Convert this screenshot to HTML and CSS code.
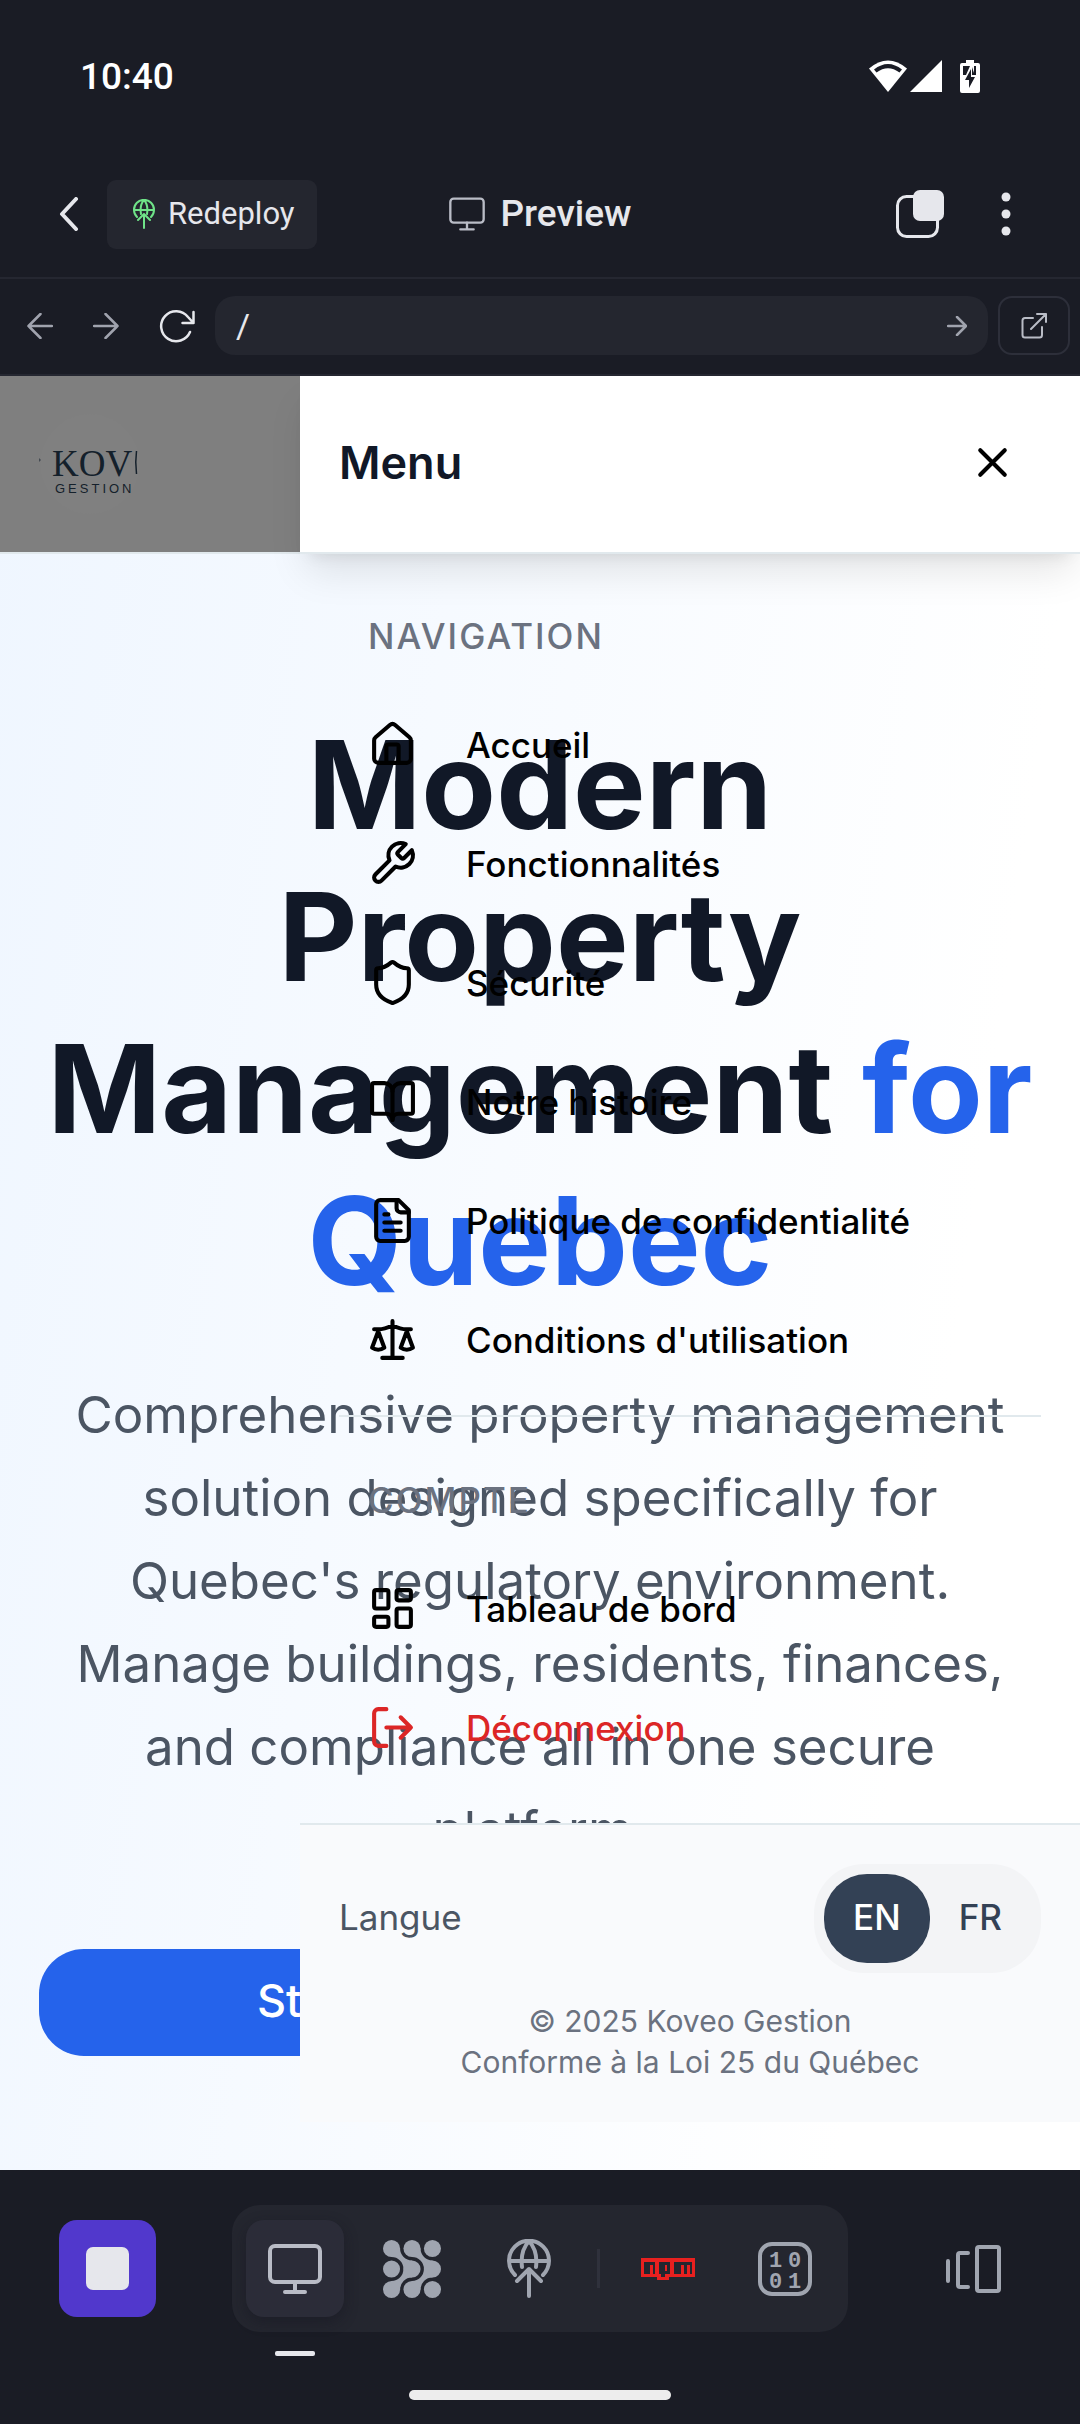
FILE: index.html
```html
<!DOCTYPE html>
<html lang="fr">
<head>
<meta charset="utf-8">
<meta name="viewport" content="width=device-width, initial-scale=1">
<title>Preview</title>
<link rel="stylesheet" href="styles.css">
</head>
<body>
<div class="status-bar">
  <span class="clock">10:40</span>
  <svg class="status-icons" width="112" height="34" viewBox="0 0 112 34" aria-hidden="true">
    <path d="M0 8.500Q19-7.500 38 8.500L19 32Z" fill="#fff"/>
    <path d="M5 9.500Q19-1.500 33 9.500L30.500 12.500Q19 4 7.500 12.500Z" fill="#1a1c25"/>
    <path d="M73 0V32H41Z" fill="#fff"/>
    <path d="M97 0H105V3H109Q111 3 111 5V31Q111 33 109 33H93Q91 33 91 31V5Q91 3 93 3H97Z" fill="#fff"/>
    <path d="M94 6H101L97 15H94ZM103 7V15H107V6H105V13" fill="#1a1c25"/>
    <path d="M102 9L96 20H100V28L106 17H102Z" fill="#1a1c25"/>
  </svg>
</div>

<header class="app-bar">
  <div class="app-left">
    <button class="icon-button back" aria-label="Back">
      <svg width="20" height="34" viewBox="0 0 20 34"><path d="M17 2L3 17L17 32" fill="none" stroke="#e6e7ec" stroke-width="4" stroke-linecap="round" stroke-linejoin="round"/></svg>
    </button>
    <button class="redeploy">
      <svg width="22" height="30" viewBox="0 0 44 60" fill="none" stroke="#6fe388" stroke-width="4" stroke-linecap="round" stroke-linejoin="round"><path d="M8 36A20 20 0 1 1 36 36M2 22H42M16 30Q13 12 22 2Q31 12 28 30M22 58V30M10 42L22 30L34 42"/></svg>
      Redeploy
    </button>
  </div>
  <h1 class="app-title">
    <svg width="36" height="34" viewBox="0 0 54 50" fill="none" stroke="#b9bcc6" stroke-width="3.500" stroke-linecap="round"><rect x="2" y="2" width="50" height="36" rx="5"/><path d="M27 38V48M17 48H37"/></svg>
    Preview
  </h1>
  <div class="app-right">
    <button class="icon-button" aria-label="Tabs">
      <svg width="48" height="48" viewBox="0 0 48 48"><rect x="1.500" y="6.500" width="40" height="40" rx="9" fill="none" stroke="#e6e7ec" stroke-width="3"/><rect x="17" y="0" width="31" height="31" rx="7" fill="#e6e7ec"/></svg>
    </button>
    <button class="icon-button" aria-label="More">
      <svg width="10" height="44" viewBox="0 0 10 44" fill="#e6e7ec"><circle cx="5" cy="5" r="4.500"/><circle cx="5" cy="22" r="4.500"/><circle cx="5" cy="39" r="4.500"/></svg>
    </button>
  </div>
</header>

<div class="url-bar">
  <div class="url-nav">
    <button class="icon-button" aria-label="Previous page"><svg width="26" height="26" viewBox="0 0 26 26" class="muted-stroke"><path d="M25 13H1.500M13.500 1L1.500 13L13.500 25"/></svg></button>
    <button class="icon-button" aria-label="Next page"><svg width="26" height="26" viewBox="0 0 26 26" class="muted-stroke"><path d="M1 13H24.500M12.500 1L24.500 13L12.500 25"/></svg></button>
    <button class="icon-button" aria-label="Reload"><svg width="36" height="34" viewBox="0 0 36 34" fill="none" stroke="#e6e7ec" stroke-width="2.500" stroke-linecap="round" stroke-linejoin="round"><path d="M31 23A15 15 0 1 1 29 8L34.500 14M34.500 3V14H23.500"/></svg></button>
  </div>
  <form class="url-field">
    <input type="text" value="/" aria-label="Path">
    <button class="icon-button" type="button" aria-label="Go"><svg width="20" height="20" viewBox="0 0 20 20" class="muted-stroke"><path d="M1 10H19M10 1L19 10L10 19"/></svg></button>
  </form>
  <button class="open-external" aria-label="Open in new tab">
    <svg width="26" height="26" viewBox="0 0 26 26" fill="none" stroke="#b9bcc6" stroke-width="2" stroke-linecap="round" stroke-linejoin="round"><path d="M12 5H4Q1.500 5 1.500 7.500V22Q1.500 24.500 4 24.500H18.500Q21 24.500 21 22V14M16 1H25V9M25 1L10 16"/></svg>
  </button>
</div>

<main class="site">
  <div class="site-header">
    <svg class="logo" width="102" height="100" viewBox="0 0 102 100" role="img" aria-label="Koveo Gestion">
      <circle cx="51" cy="50" r="50" fill="#808080"/>
      <path d="M0 44L2 46L0 48Z" fill="#444b52"/>
      <text x="13" y="62" class="logo-name">KOV</text>
      <path d="M97.500 37Q96 48 97.500 60" stroke="#14202b" stroke-width="1.500" fill="none"/>
      <text x="16" y="79" class="logo-sub">GESTION</text>
    </svg>
  </div>

  <section class="hero">
    <h2>Modern Property Management <span>for Quebec</span></h2>
    <p>Comprehensive property management solution designed specifically for Quebec's regulatory environment. Manage buildings, residents, finances, and compliance all in one secure platform.</p>
    <button class="start">Start</button>
  </section>

  <aside class="drawer">
    <header class="drawer-header">
      <h2>Menu</h2>
      <button class="icon-button" aria-label="Fermer"><svg class="menu-icon" viewBox="0 0 24 24"><path d="M18 6 6 18M6 6l12 12"/></svg></button>
    </header>
    <nav class="drawer-nav">
      <h3>NAVIGATION</h3>
      <ul>
        <li><a href="#accueil"><svg class="menu-icon" viewBox="0 0 24 24"><path d="M15 21v-8a1 1 0 0 0-1-1h-4a1 1 0 0 0-1 1v8"/><path d="M3 10a2 2 0 0 1 .709-1.528l7-5.999a2 2 0 0 1 2.582 0l7 5.999A2 2 0 0 1 21 10v9a2 2 0 0 1-2 2H5a2 2 0 0 1-2-2z"/></svg>Accueil</a></li>
        <li><a href="#fonctionnalites"><svg class="menu-icon" viewBox="0 0 24 24"><path d="M14.700 6.300a1 1 0 0 0 0 1.400l1.600 1.600a1 1 0 0 0 1.400 0l3.770-3.770a6 6 0 0 1-7.940 7.940l-6.910 6.910a2.120 2.120 0 0 1-3-3l6.910-6.910a6 6 0 0 1 7.940-7.940l-3.760 3.760z"/></svg>Fonctionnalités</a></li>
        <li><a href="#securite"><svg class="menu-icon" viewBox="0 0 24 24"><path d="M20 13c0 5-3.500 7.500-7.660 8.950a1 1 0 0 1-.67-.010C7.500 20.500 4 18 4 13V6a1 1 0 0 1 1-1c2 0 4.500-1.200 6.240-2.720a1.170 1.170 0 0 1 1.520 0C14.510 3.810 17 5 19 5a1 1 0 0 1 1 1z"/></svg>Sécurité</a></li>
        <li><a href="#histoire"><svg class="menu-icon" viewBox="0 0 24 24"><path d="M12 7v14"/><path d="M3 18a1 1 0 0 1-1-1V4a1 1 0 0 1 1-1h5a4 4 0 0 1 4 4 4 4 0 0 1 4-4h5a1 1 0 0 1 1 1v13a1 1 0 0 1-1 1h-6a3 3 0 0 0-3 3 3 3 0 0 0-3-3z"/></svg>Notre histoire</a></li>
        <li><a href="#confidentialite"><svg class="menu-icon" viewBox="0 0 24 24"><path d="M15 2H6a2 2 0 0 0-2 2v16a2 2 0 0 0 2 2h12a2 2 0 0 0 2-2V7Z"/><path d="M14 2v4a2 2 0 0 0 2 2h4M10 9H8M16 13H8M16 17H8"/></svg>Politique de confidentialité</a></li>
        <li><a href="#conditions"><svg class="menu-icon" viewBox="0 0 24 24"><path d="m16 16 3-8 3 8c-.870.650-1.920 1-3 1s-2.130-.350-3-1ZM2 16l3-8 3 8c-.870.650-1.920 1-3 1s-2.130-.350-3-1ZM7 21h10M12 3v18M3 7h2c2 0 5-1 7-2 2 1 5 2 7 2h2"/></svg>Conditions d'utilisation</a></li>
      </ul>
      <hr>
      <h3>COMPTE</h3>
      <ul>
        <li><a href="#tableau"><svg class="menu-icon" viewBox="0 0 24 24"><rect width="7" height="9" x="3" y="3" rx="1"/><rect width="7" height="5" x="14" y="3" rx="1"/><rect width="7" height="9" x="14" y="12" rx="1"/><rect width="7" height="5" x="3" y="16" rx="1"/></svg>Tableau de bord</a></li>
        <li><a href="#deconnexion" class="danger"><svg class="menu-icon" viewBox="0 0 24 24"><path d="M9 21H5a2 2 0 0 1-2-2V5a2 2 0 0 1 2-2h4M16 17l5-5-5-5M21 12H9"/></svg>Déconnexion</a></li>
      </ul>
    </nav>
    <footer class="drawer-footer">
      <div class="language">
        <span id="language-label">Langue</span>
        <div class="toggle" role="group" aria-labelledby="language-label">
          <button class="selected" aria-pressed="true">EN</button>
          <button aria-pressed="false">FR</button>
        </div>
      </div>
      <p>© 2025 Koveo Gestion<br>Conforme à la Loi 25 du Québec</p>
    </footer>
  </aside>
</main>

<footer class="dock">
  <div class="dock-row">
    <button class="stop" aria-label="Stop"><span></span></button>
    <div class="tray">
      <button class="tool active" aria-label="Preview">
        <svg width="54" height="50" viewBox="0 0 54 50" fill="none" stroke="#b9bcc6" stroke-width="4" stroke-linecap="round"><rect x="2" y="2" width="50" height="36" rx="5"/><path d="M27 38V48M17 48H37"/></svg>
      </button>
      <button class="tool" aria-label="Agent">
        <svg width="58" height="60" viewBox="-8.650 -9.300 58.700 60" fill="#a0a5b0">
          <circle cx="0" cy="0" r="8.650"/><circle cx="20.700" cy="0" r="8.650"/><circle cx="41.400" cy="0" r="8.650"/>
          <circle cx="0" cy="20.700" r="8.650"/><circle cx="20.700" cy="20.700" r="8.650"/><circle cx="41.400" cy="20.700" r="8.650"/>
          <circle cx="0" cy="41.400" r="8.650"/><circle cx="20.700" cy="41.400" r="8.650"/><circle cx="41.400" cy="41.400" r="8.650"/>
          <path id="link" d="M8.650 0A12.050 12.050 0 0 0 20.700 12.050V20.700H12.050A12.050 12.050 0 0 0 0 8.650V0Z"/>
          <use href="#link" x="20.700"/>
          <g transform="translate(0 41.400) scale(1 -1)"><use href="#link"/><use href="#link" x="20.700"/></g>
        </svg>
      </button>
      <button class="tool" aria-label="Deployments">
        <svg width="44" height="60" viewBox="0 0 44 60" fill="none" stroke="#a0a5b0" stroke-width="4" stroke-linecap="round" stroke-linejoin="round"><path d="M8 36A20 20 0 1 1 36 36M2 22H42M15 28Q13 12 22 2Q31 12 29 28M22 57V30M10 42L22 30L34 42"/></svg>
      </button>
      <span class="separator"></span>
      <button class="tool" aria-label="Packages">
        <svg width="54" height="22" viewBox="0 0 54 22"><path d="M0 0H54V19H28V22H16V19H0Z" fill="#e8201f"/><path d="M3 4H14V16H12V7H9V16H3ZM18 4H29V16H24V19H20V16H18ZM33 4H51V16H49V7H46V16H43V7H40V16H33Z" fill="#24262f"/><path d="M24 7H26V13H24Z" fill="#e8201f"/></svg>
      </button>
      <button class="tool" aria-label="Secrets">
        <svg width="54" height="54" viewBox="0 0 54 54"><rect x="2" y="2" width="50" height="50" rx="12" fill="none" stroke="#a0a5b0" stroke-width="4"/><g class="bits"><text x="11" y="25">1</text><text x="30" y="25">0</text><text x="11" y="46">0</text><text x="30" y="46">1</text></g></svg>
      </button>
    </div>
    <button class="icon-button panes" aria-label="Switch panes">
      <svg width="56" height="48" viewBox="0 0 56 48" fill="none" stroke="#a0a5b0" stroke-width="4" stroke-linecap="round" stroke-linejoin="round"><path d="M2 16V36M22 8H14Q12 8 12 10V40Q12 42 14 42H22"/><rect x="31" y="2" width="22" height="44" rx="2"/></svg>
    </button>
  </div>
  <div class="indicator"></div>
  <div class="home-handle"></div>
</footer>
</body>
</html>
```
FILE: styles.css
```css
* { box-sizing: border-box; }

body {
  margin: 0;
  min-height: 100vh;
  display: flex;
  flex-direction: column;
  background: #1a1c25;
  color: #e6e7ec;
  font-family: Inter, "Liberation Sans", sans-serif;
  font-optical-sizing: none;
}

button, input { font: inherit; color: inherit; }
button { border: 0; padding: 0; background: none; }
svg { display: block; flex: none; }
h1, h2, h3, p, ul { margin: 0; padding: 0; }
.icon-button { display: flex; }
.muted-stroke { fill: none; stroke: #a0a3ae; stroke-width: 2.5px; stroke-linecap: round; stroke-linejoin: round; }

/* Phone status bar */
.status-bar {
  display: flex;
  align-items: center;
  justify-content: space-between;
  height: 153px;
  padding: 0 99px 0 80px;
  color: #fff;
}
.clock { font: 500 37px/42px Roboto, sans-serif; }

/* App bar */
.app-bar {
  display: grid;
  grid-template-columns: 1fr auto 1fr;
  align-items: center;
  height: 126px;
  padding: 0 59px 2px;
  border-bottom: 2px solid #252731;
}
.app-left, .app-right { display: flex; align-items: center; }
.app-left { gap: 28px; }
.app-right { justify-content: flex-end; gap: 57px; padding-right: 10px; }
.redeploy {
  display: flex;
  align-items: center;
  gap: 13px;
  height: 69px;
  padding: 0 22px 0 26px;
  border-radius: 9px;
  background: #24262f;
  font: 400 31px/36px Roboto, sans-serif;
}
.app-title {
  display: flex;
  align-items: center;
  gap: 16px;
  font: 500 37px/42px Roboto, sans-serif;
}

/* Address bar */
.url-bar {
  display: flex;
  align-items: center;
  gap: 10px;
  height: 97px;
  padding: 0 10px 2px 27px;
  border-bottom: 2px solid #252731;
}
.url-nav { display: flex; align-items: center; gap: 40px; padding-right: 10px; }
.url-field {
  flex: 1;
  display: flex;
  align-items: center;
  height: 59px;
  padding: 0 21px;
  border-radius: 20px;
  background: #24262f;
}
.url-field input {
  flex: 1;
  min-width: 0;
  padding: 0;
  border: 0;
  background: none;
  font: 400 34px/40px Roboto, sans-serif;
}
.open-external {
  display: grid;
  place-items: center;
  width: 72px;
  height: 59px;
  border: 2px solid #2d2f3a;
  border-radius: 14px;
}

/* Previewed site */
.site {
  position: relative;
  flex: 1;
  overflow: hidden;
  background: linear-gradient(98deg, #eff6ff, #fff 82%);
  color: #111827;
}
.site-header {
  display: flex;
  align-items: center;
  height: 178px;
  padding: 0 39px;
  border-bottom: 2px solid #e1e9ed;
  background: #7f7f7f;
}
.logo-name { font: 37px "Liberation Serif", serif; fill: #14202b; }
.logo-sub { font: 13px "Liberation Sans", sans-serif; letter-spacing: 3px; fill: #14202b; }

.hero { padding: 155px 39px 114px; text-align: center; }
.hero h2 { font-size: 122px; line-height: 152px; font-weight: 700; }
.hero h2 span { color: #2563eb; }
.hero p {
  margin-top: 56px;
  padding: 0 20px;
  color: #4b5563;
  font-size: 51px;
  line-height: 83px;
}
.start {
  display: block;
  width: 100%;
  height: 107px;
  margin-top: 78px;
  padding: 0 0 4px 218px;
  border-radius: 45px;
  background: #2563eb;
  color: #fff;
  font-size: 45px;
  font-weight: 500;
  text-align: left;
}

/* Slide-in menu, over the page */
.drawer { position: absolute; top: 0; left: 300px; right: 0; }
.drawer-header {
  display: flex;
  align-items: center;
  justify-content: space-between;
  height: 178px;
  padding: 0 63px 3px 39px;
  border-bottom: 2px solid #e1e9ed;
  background: #fff;
  box-shadow: 0 24px 37px -7px rgb(0 0 0 / 10%), 0 10px 15px -10px rgb(0 0 0 / 10%);
}
.drawer-header h2 { font-size: 45px; line-height: 58px; font-weight: 600; }
.menu-icon {
  width: 49px;
  height: 49px;
  fill: none;
  stroke: currentColor;
  stroke-width: 2px;
  stroke-linecap: round;
  stroke-linejoin: round;
}
.drawer-header .icon-button { color: #000; }
.drawer-nav { padding: 57px 39px 42px; }
.drawer-nav h3 {
  margin-bottom: 29px;
  padding: 0 29px;
  color: #6b7280;
  font-size: 35px;
  line-height: 51px;
  font-weight: 500;
  letter-spacing: 2px;
}
.drawer-nav ul { display: flex; flex-direction: column; gap: 12px; list-style: none; }
.drawer-nav a {
  display: flex;
  align-items: center;
  gap: 49px;
  height: 107px;
  padding: 0 29px;
  color: #000;
  font-size: 35px;
  font-weight: 500;
  text-decoration: none;
}
.drawer-nav .danger { color: #dc2626; }
.drawer-nav hr { height: 2px; margin: 22px 0 58px; border: 0; background: #e1e9ed; }

.drawer-footer {
  padding: 39px;
  border-top: 2px solid #e1e9ed;
  background: #f9fafc;
}
.language { display: flex; align-items: center; justify-content: space-between; color: #4b5563; font-size: 35px; }
.language > span { padding-bottom: 3px; }
.toggle { display: flex; padding: 10px; border-radius: 50px; background: #f3f4f6; }
.toggle button {
  height: 89px;
  padding: 0 29px 3px;
  border-radius: 43px;
  color: #334155;
  font-weight: 500;
}
.toggle .selected { background: #334155; color: #fff; }
.drawer-footer p {
  margin-top: 28px;
  color: #6b7280;
  font-size: 30px;
  line-height: 41px;
  text-align: center;
}

/* Bottom dock */
.dock { padding: 35px 78px 24px 59px; }
.dock-row { display: flex; align-items: center; justify-content: space-between; }
.stop {
  display: grid;
  place-items: center;
  width: 97px;
  height: 97px;
  border-radius: 18px;
  background: #5138cc;
}
.stop span { width: 43px; height: 43px; border-radius: 7px; background: #e6e7ec; }
.tray {
  display: flex;
  align-items: center;
  gap: 19px;
  padding: 15px 14px;
  border-radius: 28px;
  background: #24262f;
}
.tool {
  display: grid;
  place-items: center;
  width: 98px;
  height: 97px;
  border-radius: 18px;
}
.tool.active { background: #2b2c38; box-shadow: 0 5px 14px rgb(20 20 32 / 45%); }
.separator { width: 3px; height: 39px; background: #2f313c; }
.panes { padding-left: 22px; }
.bits { font: bold 22px "Liberation Mono", monospace; fill: #a0a5b0; }
.indicator { width: 40px; height: 5px; margin: 19px 0 0 216px; border-radius: 2px; background: #e6e7ec; }
.home-handle { width: 262px; height: 10px; margin: 34px 0 0 350px; border-radius: 5px; background: #ededed; }
```
